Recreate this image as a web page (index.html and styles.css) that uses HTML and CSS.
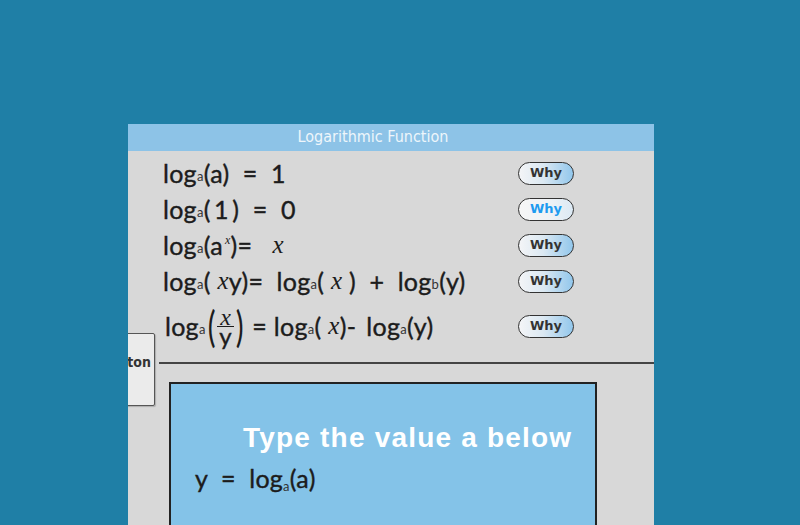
FILE: index.html
```html
<!DOCTYPE html>
<html>
<head>
<meta charset="utf-8">
<link rel="stylesheet" href="styles.css">
</head>
<body>
<div class="panel">
  <div class="title">Logarithmic Function</div>
  <div class="rules">
    <div class="rule">
      <div class="f">log<sub>a</sub>(a) &nbsp;= &nbsp;1</div>
      <button class="why">Why</button>
    </div>
    <div class="rule">
      <div class="f">log<sub>a</sub>(&thinsp;1&thinsp;) &nbsp;= &nbsp;0</div>
      <button class="why hover">Why</button>
    </div>
    <div class="rule">
      <div class="f">log<sub>a</sub>(a<sup><i>x</i></sup>)= &nbsp;&nbsp;<i>x</i></div>
      <button class="why">Why</button>
    </div>
    <div class="rule">
      <div class="f">log<sub>a</sub>( <i>x</i>y)= &nbsp;log<sub>a</sub>( <i>x</i> ) &nbsp;+ &nbsp;log<sub>b</sub>(y)</div>
      <button class="why">Why</button>
    </div>
    <div class="rule tall">
      <div class="f small">log<sub>a</sub><span class="paren">(</span><span class="frac"><span class="num"><i>x</i></span><span class="den">y</span></span><span class="paren">)</span> = log<sub>a</sub>( <i>x</i>)- &thinsp;log<sub>a</sub>(y)</div>
      <button class="why">Why</button>
    </div>
  </div>
  <div class="side-btn">ton</div>
  <div class="divider"></div>
  <div class="work">
    <div class="prompt">Type the value a below</div>
    <div class="eq">y &nbsp;= &nbsp;log<sub>a</sub>(a)</div>
  </div>
</div>
</body>
</html>
```
FILE: styles.css
```css
html, body {
  margin: 0;
  padding: 0;
}
body {
  background: #1f7fa6;
  width: 800px;
  height: 525px;
  overflow: hidden;
  padding-top: 124px;
  padding-left: 128px;
  box-sizing: border-box;
}
.panel {
  position: relative;
  width: 526px;
  height: 401px;
  background: #d8d8d8;
  overflow: hidden;
}
.title {
  height: 27px;
  background: #8dc3e7;
  color: #eef6fb;
  font-family: "DejaVu Sans Condensed", "DejaVu Sans", sans-serif;
  font-size: 16px;
  line-height: 25px;
  text-align: center;
  padding-right: 36px;
}
.rules {
  padding-top: 4px;
  display: flex;
  flex-direction: column;
}
.rule {
  height: 36px;
  display: flex;
  align-items: center;
  padding-left: 35px;
}
.rule.tall {
  height: 54px;
}
.f {
  width: 355px;
  box-sizing: border-box;
  font-family: "Lato", "Open Sans", sans-serif;
  font-size: 25px;
  letter-spacing: 0.3px;
  color: #1c1c1c;
  display: flex;
  align-items: center;
  white-space: pre;
  -webkit-text-stroke: 0.4px #1c1c1c;
}
.f.small {
  padding-left: 2px;
}
.f sub, .eq sub {
  font-size: 13px;
  vertical-align: baseline;
  position: relative;
  top: 3px;
  -webkit-text-stroke: 0;
  color: #333;
}
.f sup {
  font-size: 12px;
  vertical-align: baseline;
  position: relative;
  top: -5px;
  margin-left: 2px;
}
.f i {
  font-family: "Liberation Serif", serif;
  font-style: italic;
  -webkit-text-stroke: 0;
}
.paren {
  font-size: 42px;
  line-height: 28px;
  transform: scaleX(0.7);
  display: inline-block;
  -webkit-text-stroke: 0;
}
.frac {
  display: inline-flex;
  flex-direction: column;
  align-items: center;
  line-height: 18px;
  font-size: 24px;
}
.num {
  border-bottom: 1.5px solid #1c1c1c;
  padding: 0 3px;
}
.why {
  width: 56px;
  height: 23px;
  border: 1.5px solid #333;
  border-radius: 12px;
  background: linear-gradient(to right, #f4f5f7 0%, #dbe8f2 45%, #92c7ec 100%);
  font-family: "DejaVu Sans", sans-serif;
  font-weight: bold;
  font-size: 13px;
  color: #333;
  padding: 0;
  line-height: 18px;
  box-sizing: border-box;
}
.why.hover {
  color: #1e9bf0;
  background: linear-gradient(to right, #f6f6f6 0%, #eef2f6 60%, #dbe9f4 100%);
}
.side-btn {
  position: absolute;
  left: -10px;
  top: 209px;
  width: 37px;
  height: 73px;
  background: #ebebeb;
  border: 1px solid #555;
  border-radius: 2px;
  font-family: "DejaVu Sans Condensed", sans-serif;
  font-weight: bold;
  font-size: 14px;
  color: #333;
  display: flex;
  align-items: flex-start;
  justify-content: flex-end;
  padding: 20px 3px 0 0;
  box-sizing: border-box;
  box-shadow: 1px 1px 1px rgba(0,0,0,0.2);
}
.divider {
  margin-left: 31px;
  margin-top: 9px;
  height: 2px;
  background: #444;
}
.work {
  margin-left: 41px;
  margin-top: 18px;
  width: 428px;
  height: 200px;
  box-sizing: border-box;
  background: #84c3e8;
  border: 2px solid #222;
  padding-top: 37px;
}
.prompt {
  font-family: "Liberation Sans", Arial, sans-serif;
  font-weight: bold;
  font-size: 28px;
  letter-spacing: 1.2px;
  color: #fff;
  padding-left: 72px;
  line-height: 34px;
}
.eq {
  margin-top: 8px;
  padding-left: 24px;
  font-family: "Lato", sans-serif;
  font-size: 25px;
  letter-spacing: 0.3px;
  color: #1c1c1c;
  white-space: pre;
  -webkit-text-stroke: 0.4px #1c1c1c;
}
```
